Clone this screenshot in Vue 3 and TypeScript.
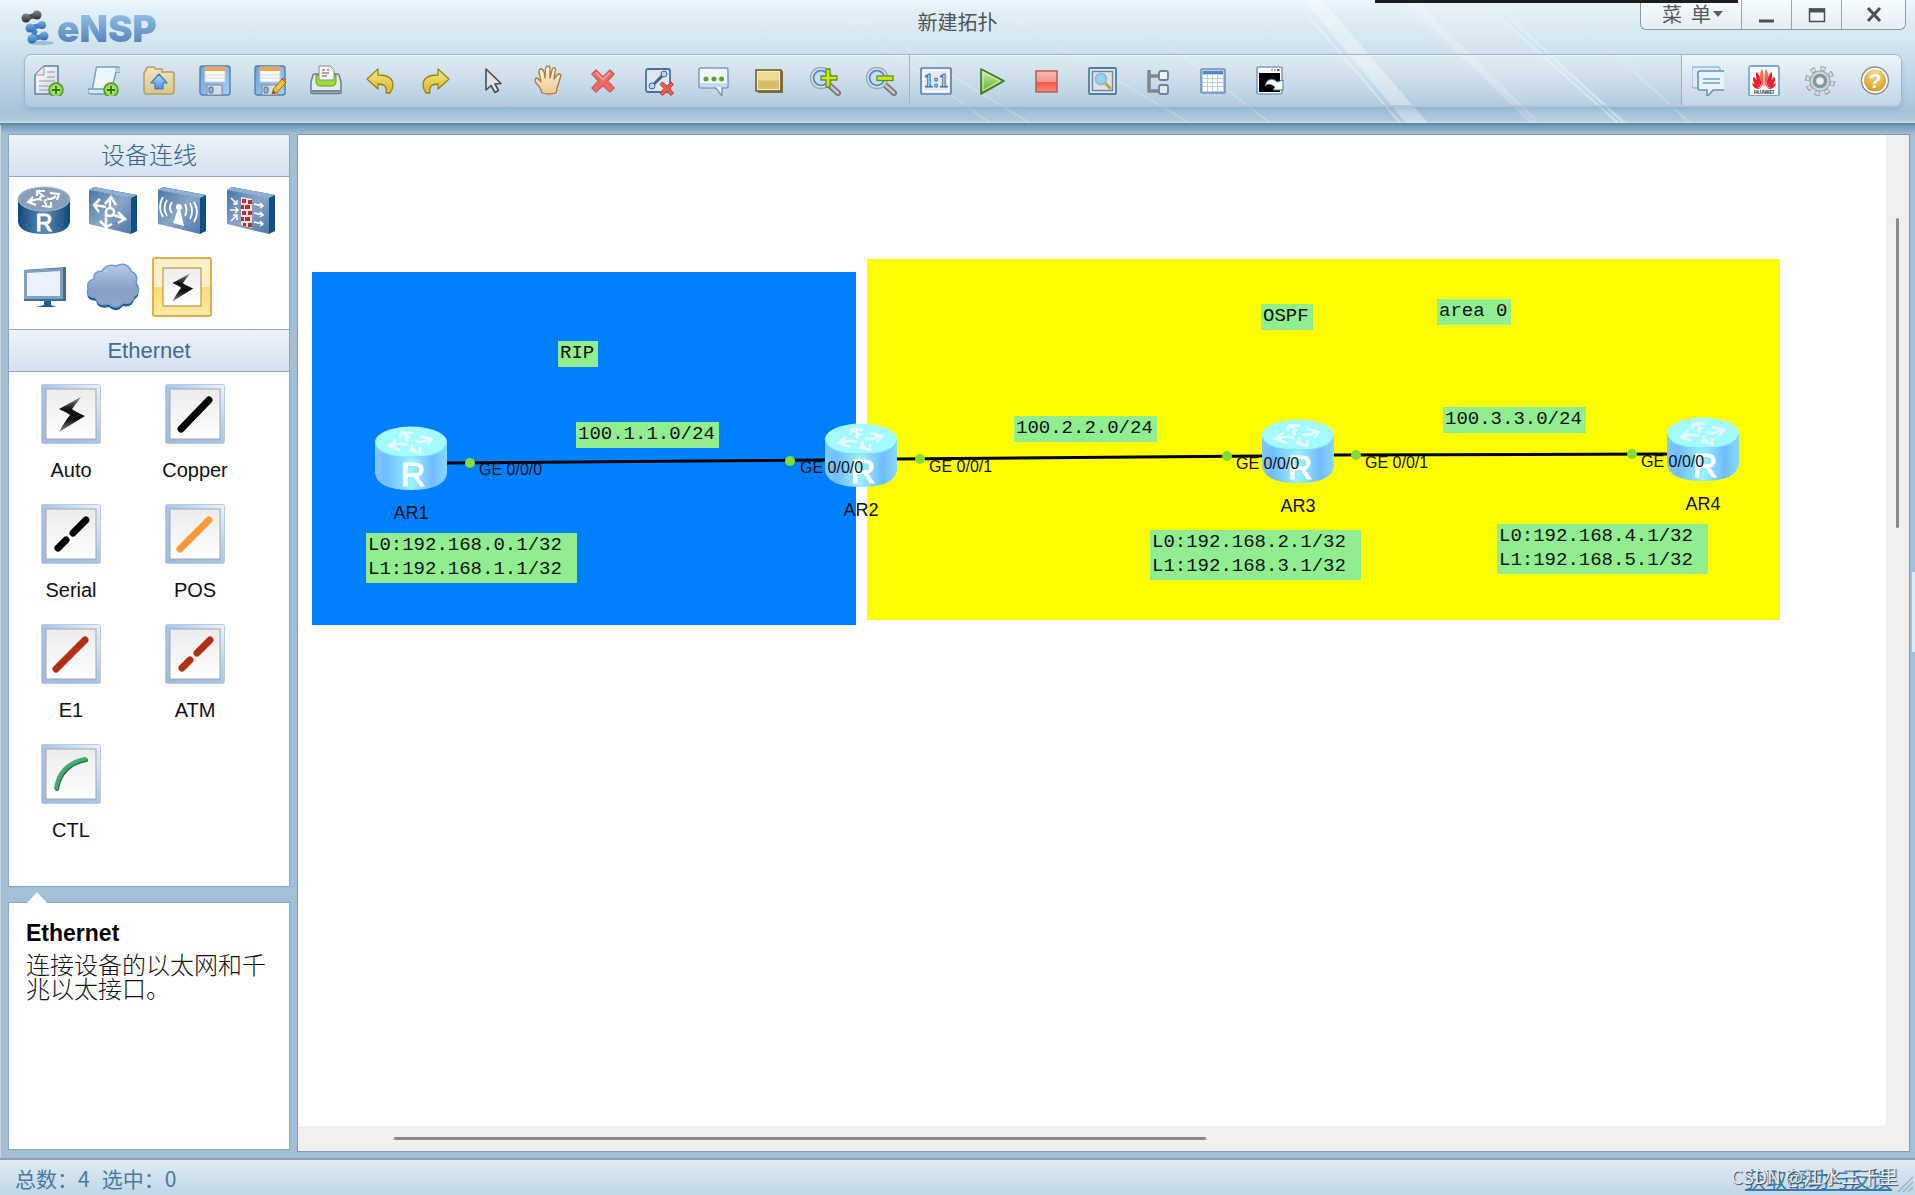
<script setup lang="ts">
interface Tool { icon: string; label: string }
interface Placed { x: number; y: number }
interface Note extends Placed { text: string }
interface Device extends Placed { name: string }
interface Glyph extends Placed { text: string; kind: string }

const editTools: Tool[] = [
  { icon: 'new', label: '新建拓扑' },
  { icon: 'script', label: '新建试卷' },
  { icon: 'open', label: '打开' },
  { icon: 'save', label: '保存' },
  { icon: 'saveas', label: '另存为' },
  { icon: 'print', label: '打印' },
  { icon: 'undo', label: '撤销' },
  { icon: 'redo', label: '恢复' },
  { icon: 'cursor', label: '选择' },
  { icon: 'hand', label: '拖动' },
  { icon: 'delete', label: '删除' },
  { icon: 'unlink', label: '删除连线' },
  { icon: 'text', label: '文本' },
  { icon: 'rect', label: '调色板' },
  { icon: 'zoomin', label: '放大' },
  { icon: 'zoomout', label: '缩小' },
]

const runTools: Tool[] = [
  { icon: 'reset', label: '重置大小' },
  { icon: 'play', label: '开启设备' },
  { icon: 'stop', label: '停止设备' },
  { icon: 'capture', label: '数据抓包' },
  { icon: 'tree', label: '显示接口' },
  { icon: 'grid', label: '显示网格' },
  { icon: 'cli', label: '打开命令行' },
]

const helpTools: Tool[] = [
  { icon: 'chat', label: '论坛' },
  { icon: 'huawei', label: '官网' },
  { icon: 'gear', label: '设置' },
  { icon: 'help', label: '帮助' },
]

const toolGroups = [
  { name: 'edit', tools: editTools },
  { name: 'run', tools: runTools },
  { name: 'aid', tools: helpTools },
]

// Letters that sit on top of an icon
const glyphs: Record<string, Glyph> = {
  reset: { text: '1:1', kind: 'ratio', x: 16, y: 23 },
  huawei: { text: 'HUAWEI', kind: 'tiny', x: 16, y: 30 },
  help: { text: '?', kind: 'mark', x: 16, y: 24 },
}

const categories: Tool[] = [
  { icon: 'router', label: '路由器' },
  { icon: 'switch', label: '交换机' },
  { icon: 'wlan', label: '无线局域网' },
  { icon: 'firewall', label: '防火墙' },
  { icon: 'pc', label: '终端' },
  { icon: 'cloud', label: '其他设备' },
  { icon: 'link', label: '设备连线' },
]

const cables: Tool[] = [
  { icon: 'auto', label: 'Auto' },
  { icon: 'copper', label: 'Copper' },
  { icon: 'serial', label: 'Serial' },
  { icon: 'pos', label: 'POS' },
  { icon: 'e1', label: 'E1' },
  { icon: 'atm', label: 'ATM' },
  { icon: 'ctl', label: 'CTL' },
]

const devices: Device[] = [
  { name: 'AR1', x: 77, y: 291 },
  { name: 'AR2', x: 527, y: 288 },
  { name: 'AR3', x: 964, y: 284 },
  { name: 'AR4', x: 1369, y: 282 },
]

const links = [
  { x1: 149, y1: 328, x2: 527, y2: 325 },
  { x1: 599, y1: 324, x2: 964, y2: 321 },
  { x1: 1036, y1: 320, x2: 1369, y2: 319 },
]

const dots: Placed[] = [
  { x: 172, y: 328 },
  { x: 492, y: 326 },
  { x: 622, y: 324 },
  { x: 929, y: 321 },
  { x: 1058, y: 320 },
  { x: 1334, y: 319 },
]

const ports: Note[] = [
  { text: 'GE 0/0/0', x: 181, y: 326 },
  { text: 'GE 0/0/0', x: 502, y: 324 },
  { text: 'GE 0/0/1', x: 631, y: 323 },
  { text: 'GE 0/0/0', x: 938, y: 320 },
  { text: 'GE 0/0/1', x: 1067, y: 319 },
  { text: 'GE 0/0/0', x: 1343, y: 318 },
]

const notes: Note[] = [
  { text: 'RIP', x: 260, y: 206 },
  { text: '100.1.1.0/24', x: 278, y: 287 },
  { text: 'L0:192.168.0.1/32 \nL1:192.168.1.1/32 ', x: 68, y: 398 },
  { text: 'OSPF', x: 963, y: 169 },
  { text: 'area 0', x: 1139, y: 164 },
  { text: '100.2.2.0/24', x: 716, y: 281 },
  { text: '100.3.3.0/24', x: 1145, y: 272 },
  { text: 'L0:192.168.2.1/32 \nL1:192.168.3.1/32 ', x: 852, y: 395 },
  { text: 'L0:192.168.4.1/32 \nL1:192.168.5.1/32 ', x: 1199, y: 389 },
]

const at = (p: Placed) => ({ left: p.x + 'px', top: p.y + 'px' })
</script>

<template>
  <div class="window">
    <svg class="sprite" aria-hidden="true">
      <defs>
        <linearGradient id="gPaper" x1="0" y1="0" x2="1" y2="1"><stop offset="0" stop-color="#fff" /><stop offset="1" stop-color="#cfd5dc" /></linearGradient>
        <linearGradient id="gFolder" x1="0" y1="0" x2="0" y2="1"><stop offset="0" stop-color="#f0e6c0" /><stop offset="1" stop-color="#d8c68a" /></linearGradient>
        <linearGradient id="gBlue" x1="0" y1="0" x2="0" y2="1"><stop offset="0" stop-color="#bcdcff" /><stop offset="1" stop-color="#4f8fe0" /></linearGradient>
        <linearGradient id="gDisk" x1="0" y1="0" x2="1" y2="1"><stop offset="0" stop-color="#6ea3d8" /><stop offset="1" stop-color="#a9cdf0" /></linearGradient>
        <linearGradient id="gGold" x1="0" y1="0" x2="0" y2="1"><stop offset="0" stop-color="#f7ea86" /><stop offset="1" stop-color="#d8b62a" /></linearGradient>
        <linearGradient id="gGreen" x1="0" y1="0" x2="0" y2="1"><stop offset="0" stop-color="#d7efb6" /><stop offset="1" stop-color="#55a51f" /></linearGradient>
        <linearGradient id="gRed" x1="0" y1="0" x2="0" y2="1"><stop offset="0" stop-color="#f6bdb8" /><stop offset="0.5" stop-color="#f3958c" /><stop offset="0.55" stop-color="#f4574a" /><stop offset="1" stop-color="#f58a7d" /></linearGradient>
        <linearGradient id="gHand" x1="0" y1="0" x2="0" y2="1"><stop offset="0" stop-color="#fff6e6" /><stop offset="1" stop-color="#eec78d" /></linearGradient>
        <radialGradient id="gPlus"><stop offset="0" stop-color="#d6f59a" /><stop offset="1" stop-color="#7ecb3c" /></radialGradient>
        <radialGradient id="gHelp" cx="0.5" cy="0.2" r="0.9"><stop offset="0" stop-color="#f8d98c" /><stop offset="1" stop-color="#d6920e" /></radialGradient>
        <linearGradient id="gBox" x1="0" y1="0" x2="1" y2="1"><stop offset="0" stop-color="#4877a8" /><stop offset="0.5" stop-color="#8aa6c6" /><stop offset="1" stop-color="#4c78a8" /></linearGradient>
        <linearGradient id="gCyl" x1="0" y1="0" x2="1" y2="0"><stop offset="0" stop-color="#12487c" /><stop offset="0.5" stop-color="#5f8cb6" /><stop offset="1" stop-color="#12487c" /></linearGradient>
        <linearGradient id="gCloud" x1="0" y1="0" x2="0" y2="1"><stop offset="0" stop-color="#b4cae8" /><stop offset="0.6" stop-color="#869fc4" /><stop offset="1" stop-color="#90a8ca" /></linearGradient>
        <linearGradient id="gNode" x1="0" y1="0" x2="1" y2="0"><stop offset="0" stop-color="#86c8fb" /><stop offset="0.15" stop-color="#70bcff" /><stop offset="0.5" stop-color="#9af2ff" /><stop offset="0.8" stop-color="#70bcff" /><stop offset="1" stop-color="#8ad8ff" /></linearGradient>
        <linearGradient id="gFrame" x1="0" y1="1" x2="1" y2="0"><stop offset="0" stop-color="#9bb9dc" /><stop offset="0.5" stop-color="#a9c5e8" /><stop offset="1" stop-color="#eef4fc" /></linearGradient>
        <linearGradient id="gTile" x1="0" y1="0" x2="0" y2="1"><stop offset="0" stop-color="#ececec" /><stop offset="1" stop-color="#fff" /></linearGradient>
        <linearGradient id="gBolt" x1="0" y1="0" x2="0" y2="1"><stop offset="0" stop-color="#8c8c84" /><stop offset="0.35" stop-color="#11140c" /><stop offset="0.65" stop-color="#11140c" /><stop offset="1" stop-color="#8c8c84" /></linearGradient>
        <linearGradient id="gBead" x1="0" y1="0" x2="0" y2="1"><stop offset="0" stop-color="#7fb2e2" /><stop offset="1" stop-color="#2a68b0" /></linearGradient>
        <linearGradient id="gDark" x1="0" y1="0" x2="0" y2="1"><stop offset="0" stop-color="#8a8a8a" /><stop offset="1" stop-color="#2c2c2c" /></linearGradient>
      </defs>

      <symbol id="i-plus" viewBox="0 0 16 16">
        <circle cx="8" cy="8" r="7" fill="url(#gPlus)" stroke="#4f9a22" stroke-width="1.5" />
        <path d="M8 4v8M4 8h8" stroke="#35701a" stroke-width="1.8" />
      </symbol>
      <symbol id="i-new" viewBox="0 0 32 32">
        <path d="M12 2H26V30H3V11Z" fill="url(#gPaper)" stroke="#5f7fa3" stroke-width="1.5" stroke-linejoin="round" />
        <path d="M12 2V11H3Z" fill="#e8ebee" stroke="#8d9cae" />
        <path d="M15 8h8M15 13h8M7 17h16M7 22h12M7 26h9" stroke="#a8b7c8" stroke-width="1.6" />
        <use href="#i-plus" x="16" y="18" width="16" height="16" />
      </symbol>
      <symbol id="i-script" viewBox="0 0 32 32">
        <path d="M9 3H30Q33 4 32 8H28L23 27H4L8 6Q8 3 9 3Z" fill="#eef6fa" stroke="#6fa0ba" stroke-width="1.4" />
        <path d="M0 25H24Q26 30 23 30H3Q-1 30 0 25Z" fill="#d5e6ee" stroke="#6fa0ba" stroke-width="1.4" />
        <path d="M27 4h5v4h-5z" fill="#b5d2df" />
        <use href="#i-plus" x="15" y="18" width="16" height="16" />
      </symbol>
      <symbol id="i-open" viewBox="0 0 32 32">
        <path d="M3 6Q3 3 6 3H11L13 5H19V8H29Q31 8 31 11V27Q31 30 28 30H4Q1 30 1 27V9Z" fill="url(#gFolder)" stroke="#b59f57" stroke-width="1.5" />
        <path d="M16 10L24 19H20V25H12V19H8Z" fill="url(#gBlue)" stroke="#3f76c6" stroke-width="1.2" stroke-linejoin="round" />
      </symbol>
      <symbol id="i-save" viewBox="0 0 32 32">
        <rect x="1" y="2" width="30" height="29" rx="2.5" fill="url(#gDisk)" stroke="#4d7fb9" stroke-width="1.4" />
        <path d="M6 3H26V18H6Z" fill="#fafafa" stroke="#c2d2e2" />
        <path d="M5.500 3H26.500V7H5.500Z" fill="#f5a54a" />
        <path d="M7 11h18M7 14h18" stroke="#dadada" />
        <path d="M8 21H23V31H8Z" fill="#dcdfe2" stroke="#7b8c9e" />
        <rect x="10" y="23" width="4" height="6" rx="1" fill="#8fb6e0" stroke="#4f6f92" />
      </symbol>
      <symbol id="i-saveas" viewBox="0 0 32 32">
        <use href="#i-save" width="32" height="32" />
        <path d="M18 30L19.500 25L28 15L32 18.500L23 28.500Z" fill="#f5c51d" stroke="#9b6a11" />
        <path d="M28 15L32 18.500L33 17L29.500 14Z" fill="#e9867a" stroke="#a5473c" />
        <path d="M18 30L19.500 26L22 29Z" fill="#b8432b" />
      </symbol>
      <symbol id="i-print" viewBox="0 0 32 32">
        <path d="M3 11Q3 10 5 10H27Q29 10 29 11L31 18V28Q31 29.500 29 29.500H3Q1 29.500 1 28V18Z" fill="#e7ebee" stroke="#697b90" stroke-width="1.5" />
        <path d="M6 11H26V17Q26 22 22 22H10Q6 22 6 17Z" fill="#9fdc35" stroke="#5f9e1a" />
        <path d="M9 2H20L24 6V16H9Z" fill="#f5f5f5" stroke="#8b8f94" />
        <path d="M12 6h3M17 6h2M12 9h7M12 12h5" stroke="#8d8d8d" stroke-width="1.4" />
        <path d="M2 26H30V28.500H2Z" fill="#77879a" />
      </symbol>
      <symbol id="i-undo" viewBox="0 0 32 32">
        <path d="M13 5V11Q27 11 28 20Q28 25 25 29H21Q23 20 13 20V25L2 15Z" fill="url(#gGold)" stroke="#9a8113" stroke-width="1.3" stroke-linejoin="round" />
      </symbol>
      <symbol id="i-redo" viewBox="0 0 32 32">
        <path d="M17 5V11Q3 11 2 20Q2 25 5 29H9Q7 20 17 20V25L28 15Z" fill="url(#gGold)" stroke="#9a8113" stroke-width="1.3" stroke-linejoin="round" />
      </symbol>
      <symbol id="i-cursor" viewBox="0 0 32 32">
        <path d="M10 5V26L15 21.500L19 28.500L22.500 26.500L19 20L25 19.500Z" fill="#e3e3e3" stroke="#4e4e4e" stroke-width="1.6" stroke-linejoin="round" />
      </symbol>
      <symbol id="i-hand" viewBox="0 0 32 32">
        <path d="M10 29Q9 24 4 19Q2 16 4 14Q6 14 9 18L7 8Q7 5 9 5Q11 5 12 8L13 14L13.500 5Q14 2 16 2Q18 2 18 5V14L20 6Q21 3 23 4Q24 5 23 8L22 15L25 11Q27 9 29 11L27 18Q25 23 24 29Q17 31 10 29Z" fill="url(#gHand)" stroke="#a77d45" stroke-width="1.3" stroke-linejoin="round" />
      </symbol>
      <symbol id="i-delete" viewBox="0 0 32 32">
        <path d="M9 6L16 13L23 6L27 10L20.500 17L27 24L23 28L16 21.500L9 28L5 24L11.500 17L5 10Z" fill="#f2695f" stroke="#d0605a" stroke-width="1.6" stroke-linejoin="round" />
        <path d="M9 8.500L16 15.500L23 8.500" stroke="#f9aaa4" fill="none" stroke-width="1.5" />
      </symbol>
      <symbol id="i-unlink" viewBox="0 0 32 32">
        <rect x="3" y="5" width="24" height="23" rx="2" fill="#dfe6ee" stroke="#4e7099" stroke-width="1.8" />
        <path d="M9 22L21 10" stroke="#41658f" stroke-width="3" />
        <circle cx="21" cy="10" r="3" fill="#b7d2f3" stroke="#41658f" /><circle cx="9" cy="22" r="3" fill="#b7d2f3" stroke="#41658f" />
        <path d="M19.500 18L24 22L28 18L30.500 20.500L26.500 24.500L30.500 29L28 31.500L24 27.500L19.500 31.500L17 29L21 24.500L17 20.500Z" fill="#ef5b4c" stroke="#b93d33" />
      </symbol>
      <symbol id="i-text" viewBox="0 0 32 32">
        <path d="M3 4H28Q30 4 30 6V22Q30 24 28 24H24V32L18 24H3Q1 24 1 22V6Q1 4 3 4Z" fill="#f2f7fd" stroke="#7b9cc2" stroke-width="1.5" />
        <path d="M2 19H29V23H2Z" fill="#c5d9ef" />
        <circle cx="8" cy="15" r="2.500" fill="#5fa328" /><circle cx="16" cy="15" r="2.500" fill="#5fa328" /><circle cx="23.500" cy="15" r="2.500" fill="#5fa328" />
      </symbol>
      <symbol id="i-rect" viewBox="0 0 32 32">
        <path d="M4 7H29V29H4Z" fill="#7c7040" />
        <rect x="2" y="6" width="25" height="21" fill="#ecd994" stroke="#6e6130" stroke-width="1.6" />
        <path d="M4 16.500H25V25H4Z" fill="#d5be6a" />
        <rect x="3.500" y="7.500" width="22" height="18" fill="none" stroke="#f9efc4" />
      </symbol>
      <symbol id="i-lens" viewBox="0 0 32 32">
        <path d="M19 20L29 29" stroke="#77797c" stroke-width="6" stroke-linecap="round" /><path d="M19 20L29 29" stroke="#c6c8ca" stroke-width="2.500" stroke-linecap="round" />
        <circle cx="12" cy="14" r="10.500" fill="#e9edf1" stroke="#a1a9b1" stroke-width="1.5" />
        <circle cx="12" cy="14" r="7.500" fill="#c4defa" stroke="#5d8ecb" stroke-width="2" />
      </symbol>
      <symbol id="i-zoomin" viewBox="0 0 32 32">
        <use href="#i-lens" width="32" height="32" />
        <path d="M17 5H21V12H28V16H21V23H17V16H12V12H17Z" fill="#c8e820" stroke="#63940f" stroke-width="1.3" />
      </symbol>
      <symbol id="i-zoomout" viewBox="0 0 32 32">
        <use href="#i-lens" width="32" height="32" />
        <rect x="12" y="12" width="16" height="4.500" fill="#c8e820" stroke="#63940f" stroke-width="1.3" />
      </symbol>
      <symbol id="i-reset" viewBox="0 0 32 32">
        <rect x="1" y="4" width="30" height="26" rx="1" fill="#e6ebf0" stroke="#5b83ae" stroke-width="1.7" />
        <rect x="3.500" y="6.500" width="25" height="21" fill="none" stroke="#fff" />
      </symbol>
      <symbol id="i-play" viewBox="0 0 32 32">
        <path d="M5 5L28 17L5 30Z" fill="url(#gGreen)" stroke="#3e7a1b" stroke-width="1.6" stroke-linejoin="round" />
        <path d="M7 8.500L24 17L7 26.500Z" fill="none" stroke="#d4efc0" />
      </symbol>
      <symbol id="i-stop" viewBox="0 0 32 32">
        <rect x="5" y="7" width="21" height="21" fill="url(#gRed)" stroke="#b9625c" stroke-width="1.6" />
      </symbol>
      <symbol id="i-capture" viewBox="0 0 32 32">
        <rect x="2" y="4" width="27" height="26" rx="1" fill="#dde5ec" stroke="#567ba2" stroke-width="1.8" />
        <rect x="5.500" y="7.500" width="20" height="19" fill="#dfe2e5" stroke="#6a87a6" stroke-width="1.4" />
        <path d="M18 19L23 24" stroke="#c9a040" stroke-width="3" stroke-linecap="round" />
        <circle cx="14" cy="15" r="5.500" fill="#8fd4fa" stroke="#9fb3c6" stroke-width="1.6" />
      </symbol>
      <symbol id="i-tree" viewBox="0 0 32 32">
        <path d="M6 6V27H16M6 12H16" fill="none" stroke="#7f868c" stroke-width="3.500" />
        <rect x="16" y="7" width="9" height="9" rx="2" fill="#f3f5f7" stroke="#6d8399" stroke-width="1.8" />
        <rect x="16" y="21" width="9" height="9" rx="2" fill="#e3e7ea" stroke="#6d8399" stroke-width="1.8" />
      </symbol>
      <symbol id="i-grid" viewBox="0 0 32 32">
        <rect x="3" y="5" width="24" height="24" rx="1" fill="#b9cbe0" stroke="#6f93bd" stroke-width="1.6" />
        <path d="M5 7H25V10H5Z" fill="#5586c6" />
        <path d="M5 11h4v3h-4zM10 11h4v3h-4zM15 11h4v3h-4zM20 11h5v3h-5zM5 15h4v3h-4zM10 15h4v3h-4zM15 15h4v3h-4zM20 15h5v3h-5zM5 19h4v3h-4zM10 19h4v3h-4zM15 19h4v3h-4zM20 19h5v3h-5zM5 23h4v4h-4zM10 23h4v4h-4zM15 23h4v4h-4zM20 23h5v4h-5z" fill="#fff" />
      </symbol>
      <symbol id="i-cli" viewBox="0 0 32 32">
        <rect x="3" y="3" width="25" height="27" rx="2" fill="#fff" stroke="#7f9bbd" stroke-width="1.6" />
        <path d="M5 9H26V28H5Z" fill="#000" />
        <path d="M17 6h2M20 6h2" stroke="#777" /><path d="M23 6h2.500" stroke="#d33" stroke-width="2" />
        <path d="M11 22Q13 13 21 16L23 18L29 16V26H19L21 23Q15 18 11 22Z" fill="#fff" stroke="#4a79ae" stroke-width="1" />
      </symbol>
      <symbol id="i-chat" viewBox="0 0 32 32">
        <rect x="0" y="3" width="28" height="21" rx="2" fill="#dcebf7" stroke="#9abbd9" stroke-width="1.3" />
        <path d="M8 7H31Q33 7 33 9V24Q33 26 31 26H21L15 33V26H8Q6 26 6 24V9Q6 7 8 7Z" fill="#e9f3fb" stroke="#6d8fb4" stroke-width="1.6" />
        <path d="M11 15h17M11 19h17" stroke="#6f9acb" stroke-width="1.6" />
      </symbol>
      <symbol id="i-huawei" viewBox="0 0 32 32">
        <rect x="1" y="2" width="30" height="30" rx="2" fill="#f7f9fb" stroke="#7ba9d9" stroke-width="1.8" />
        <g fill="#ea1c2b">
          <path d="M15.500 23Q9 13 14 5Q16 7 15.500 23Z" fill="#f26a50" /><path d="M16.500 23Q23 13 18 5Q16 7 16.500 23Z" fill="#f26a50" />
          <path d="M14 23Q7 18 8 8Q12 9 14 23Z" /><path d="M18 23Q25 18 24 8Q20 9 18 23Z" />
          <path d="M13 24Q4 21 5 13Q9 14 13 24Z" /><path d="M19 24Q28 21 27 13Q23 14 19 24Z" />
          <path d="M12 25Q5 25 4 19Q8 20 12 25Z" /><path d="M20 25Q27 25 28 19Q24 20 20 25Z" />
        </g>
      </symbol>
      <symbol id="i-gear" viewBox="0 0 32 32">
        <circle cx="17" cy="17" r="12.500" fill="none" stroke="#8b9ea0" stroke-width="5" stroke-dasharray="5 4.817" />
        <circle cx="17" cy="17" r="12.500" fill="none" stroke="#d3dddf" stroke-width="3" stroke-dasharray="4 5.817" stroke-dashoffset="-0.500" />
        <circle cx="17" cy="17" r="10" fill="#cdd8da" stroke="#9dadaf" stroke-width="1.2" />
        <circle cx="17" cy="17" r="5.500" fill="#e8f0f4" stroke="#84989b" stroke-width="3.500" />
      </symbol>
      <symbol id="i-help" viewBox="0 0 32 32">
        <circle cx="16" cy="16.500" r="13.500" fill="#fff" stroke="#8a8f94" stroke-width="1.4" />
        <circle cx="16" cy="16.500" r="11" fill="url(#gHelp)" />
      </symbol>

      <symbol id="i-router" viewBox="0 0 56 52">
        <path d="M2 15V37Q4 49 28 49Q52 49 54 37V15Z" fill="url(#gCyl)" />
        <ellipse cx="28" cy="14" rx="26" ry="12" fill="#8a9db9" stroke="#a9bad0" />
        <path d="M21 11V6H29M22 7L27 11Q22 12 25 15M31 13Q35 16 40 11M34 8L43 9L41 15M26 15Q20 13 13 17M17 12L12 17L20 20M31 15Q26 15 31 20M26 21L35 22V17" fill="none" stroke="#fff" stroke-width="2" />
      </symbol>
      <symbol id="i-box" viewBox="0 0 56 52">
        <path d="M4 5L9 2L52 10V46L46 49L46 13Z" fill="#0d4f86" />
        <path d="M4 5L9 2L52 10L46 13Z" fill="#8fb0d0" />
        <path d="M4 5L46 13V49L4 39Z" fill="url(#gBox)" />
      </symbol>
      <symbol id="i-switch" viewBox="0 0 56 52">
        <use href="#i-box" width="56" height="52" />
        <g fill="none" stroke="#fff" stroke-width="2.500">
          <path d="M25 22V15M20 19L26 12L31 20M21 22L10 20M15 14L9 20L14 27M29 30L40 34M33 27L40 34L33 38M21 28V42M15 36L21 42L27 39" />
          <circle cx="25" cy="27" r="4" />
        </g>
      </symbol>
      <symbol id="i-wlan" viewBox="0 0 56 52">
        <use href="#i-box" width="56" height="52" />
        <path d="M24 24L19 38L30 41L26 24Z" fill="#fff" /><circle cx="25" cy="22" r="3" fill="#fff" />
        <path d="M18 17Q14 23 18 28M13 15Q8 23 13 31M9 12Q3 22 9 32M31 19Q34 25 31 31M36 18Q40 26 36 34M40 17Q46 27 40 37" fill="none" stroke="#fff" stroke-width="1.800" />
      </symbol>
      <symbol id="i-firewall" viewBox="0 0 56 52">
        <use href="#i-box" width="56" height="52" />
        <path d="M18 12L29 14V43L18 40Z" fill="#f5e3e3" />
        <path d="M19 14h4v4h-4zM25 15h4v4h-4zM18 20h3v4h-3zM22 20h5v4h-5zM19 26h4v4h-4zM25 26h4v4h-4zM18 32h3v4h-3zM22 32h5v4h-5zM20 38h3v3h-3zM25 38h4v4h-4z" fill="#c22a2e" />
        <path d="M8 13L14 19M10 19H14V15M7 25H15M12 22L15 25L12 28M8 36L14 30M10 30H14V35M31 19L40 21M37 18L40 21L37 23M31 28L40 30M37 27L40 30L37 32M31 37L40 39M37 36L40 39L37 41" fill="none" stroke="#fff" stroke-width="1.500" />
      </symbol>
      <symbol id="i-pc" viewBox="0 0 56 52">
        <path d="M8 9L50 6V40H8Z" fill="#416b99" /><path d="M8 9L47 7V38H8Z" fill="#7f9fc2" />
        <path d="M11 12L44 10V35H11Z" fill="#e9f1fb" />
        <path d="M28 40H35V44L40 46H20L28 44Z" fill="#265c93" />
      </symbol>
      <symbol id="i-cloud" viewBox="0 0 56 52">
        <path d="M9 18Q8 10 17 10Q22 2 31 5Q42 0 46 10Q54 14 51 22Q57 30 49 36Q47 44 38 42Q31 50 24 43Q13 46 11 37Q0 36 3 28Q1 20 9 18Z" transform="translate(0 3)" fill="#1e5790" />
        <path d="M9 18Q8 10 17 10Q22 2 31 5Q42 0 46 10Q54 14 51 22Q57 30 49 36Q47 44 38 42Q31 50 24 43Q13 46 11 37Q0 36 3 28Q1 20 9 18Z" fill="url(#gCloud)" stroke="#6d9bd0" stroke-width="1.500" />
      </symbol>
      <symbol id="i-bolt" viewBox="0 0 60 60">
        <path d="M40 13L18 25Q27 29 29 31Q24 37 18 48L44 32Q33 27 31 25Z" fill="url(#gBolt)" />
      </symbol>
      <symbol id="i-link" viewBox="0 0 56 52">
        <rect x="9" y="7" width="38" height="38" fill="url(#gTile)" stroke="#bd9b3f" stroke-width="1.200" />
        <use href="#i-bolt" x="4" y="2" width="48" height="48" />
      </symbol>
      <symbol id="i-tile" viewBox="0 0 60 60">
        <rect x="0.500" y="0.500" width="59" height="59" rx="2" fill="url(#gFrame)" stroke="#b8cbe2" />
        <rect x="5" y="5" width="50" height="50" fill="url(#gTile)" stroke="#9fa9b6" />
      </symbol>
      <symbol id="i-auto" viewBox="0 0 60 60"><use href="#i-tile" width="60" height="60" /><use href="#i-bolt" width="60" height="60" /></symbol>
      <symbol id="i-copper" viewBox="0 0 60 60"><use href="#i-tile" width="60" height="60" /><path d="M16 45L44 16" stroke="#000" stroke-width="7" stroke-linecap="round" /></symbol>
      <symbol id="i-serial" viewBox="0 0 60 60"><use href="#i-tile" width="60" height="60" /><path d="M17 44L25 36M32 29L45 16" stroke="#000" stroke-width="7" stroke-linecap="round" /></symbol>
      <symbol id="i-pos" viewBox="0 0 60 60"><use href="#i-tile" width="60" height="60" /><path d="M15 45L44 16" stroke="#ff9a36" stroke-width="7" stroke-linecap="round" /></symbol>
      <symbol id="i-e1" viewBox="0 0 60 60"><use href="#i-tile" width="60" height="60" /><path d="M15 45L44 16" stroke="#b03012" stroke-width="7" stroke-linecap="round" /></symbol>
      <symbol id="i-atm" viewBox="0 0 60 60"><use href="#i-tile" width="60" height="60" /><path d="M17 44L25 36M32 29L45 16" stroke="#b03012" stroke-width="7" stroke-linecap="round" /></symbol>
      <symbol id="i-ctl" viewBox="0 0 60 60"><use href="#i-tile" width="60" height="60" /><path d="M16 45Q20 21 45 16" fill="none" stroke="#3b5a48" stroke-width="4" stroke-linecap="round" /><path d="M15 44Q19 20 44 15" fill="none" stroke="#3fae74" stroke-width="4" stroke-linecap="round" /></symbol>

      <symbol id="i-node" viewBox="0 0 72 64">
        <path d="M0 17V47Q2 64 36 64Q70 64 72 47V17Z" fill="url(#gNode)" />
        <ellipse cx="36" cy="16" rx="36" ry="15.500" fill="#a4fbff" />
        <path d="M0 17Q2 31 36 31Q70 31 72 17" fill="none" stroke="#7fd6fa" stroke-width="1.200" />
        <path d="M25 12L27 6L38 7M28 7L34 11Q28 13 34 15M40 15Q46 18 54 13M45 10L57 13L52 19M32 19Q25 16 16 20M21 14L14 20L25 24M39 19Q33 20 41 25M34 24L45 27V21" fill="none" stroke="#e6f9fd" stroke-width="2.600" />
      </symbol>
    </svg>

    <header class="header">
      <svg class="streaks" viewBox="0 0 1115 123" preserveAspectRatio="xMaxYMin slice" aria-hidden="true">
        <path d="M590 0H680L830 123H740Z" fill="#fff" opacity="0.1" />
        <path d="M504 0H522L628 123H606Z" fill="#fff" opacity="0.35" />
        <path d="M495 0L600 123" stroke="#e9fbff" stroke-width="2" opacity="0.4" />
        <path d="M610 0L735 123" stroke="#fff" stroke-width="8" opacity="0.2" />
        <path d="M680 0L818 123M690 0L824 123" stroke="#dcfaff" stroke-width="2" opacity="0.5" />
        <path d="M780 22L890 123" stroke="#c9f2fb" stroke-width="2" opacity="0.35" />
        <path d="M20 0L190 123M60 20L230 123M220 23L390 123M350 30L470 123" stroke="#e2f6fc" stroke-width="2" opacity="0.25" fill="none" />
      </svg>
      <div class="titlebar">
        <div class="brand">
          <svg width="34" height="36" viewBox="0 0 34 36" aria-hidden="true">
            <ellipse cx="20" cy="33" rx="13" ry="2" fill="#7ba3cf" opacity="0.6" />
            <path d="M5 8L16 5" stroke="#4d4d4d" stroke-width="5" /><circle cx="5" cy="8" r="4.500" fill="url(#gDark)" /><circle cx="16" cy="5" r="4.500" fill="url(#gDark)" />
            <path d="M21 15L9 18L14 22L11 29L23 26" fill="none" stroke="#4683c3" stroke-width="5" stroke-linejoin="round" />
            <circle cx="21" cy="15" r="4" fill="url(#gBead)" /><circle cx="9" cy="18" r="4.500" fill="url(#gBead)" /><circle cx="11" cy="29" r="4.500" fill="url(#gBead)" /><circle cx="23" cy="26" r="4.500" fill="url(#gBead)" />
          </svg>
          <span class="brand-name">eNSP</span>
        </div>
        <h1 class="doc-title">新建拓扑</h1>
        <div class="win-controls">
          <button class="menu" type="button">菜&nbsp; 单<svg width="12" height="8" viewBox="0 0 12 8" aria-hidden="true"><path d="M1 1H11L6 7Z" fill="#5b6065" /></svg></button>
          <button type="button" aria-label="最小化"><svg width="20" height="20" viewBox="0 0 20 20"><path d="M2 16H17" stroke="#4b5055" stroke-width="3" /></svg></button>
          <button type="button" aria-label="最大化"><svg width="20" height="20" viewBox="0 0 20 20"><path d="M2.500 4H17.500V16.500H2.500Z" fill="none" stroke="#4b5055" stroke-width="1.500" /><path d="M2 5.500H18" stroke="#4b5055" stroke-width="4" /></svg></button>
          <button class="close" type="button" aria-label="关闭"><svg width="20" height="20" viewBox="0 0 20 20"><path d="M4 3L16 16M16 3L4 16" stroke="#4b5055" stroke-width="3" /></svg></button>
        </div>
      </div>
      <nav class="toolbar">
        <div v-for="g in toolGroups" :key="g.name" class="group" :class="g.name">
          <button v-for="t in g.tools" :key="t.icon" type="button" :aria-label="t.label">
            <svg viewBox="0 0 32 32">
              <use :href="'#i-' + t.icon" width="32" height="32" />
              <text v-if="glyphs[t.icon]" :x="glyphs[t.icon].x" :y="glyphs[t.icon].y" :class="glyphs[t.icon].kind">{{ glyphs[t.icon].text }}</text>
            </svg>
          </button>
        </div>
      </nav>
      <div class="dock-strip"></div>
    </header>

    <main class="body">
      <aside class="side">
        <section class="panel palette">
          <h2 class="panel-title">设备连线</h2>
          <div class="categories">
            <button v-for="c in categories" :key="c.icon" type="button" :class="{ active: c.icon === 'link' }" :aria-label="c.label">
              <svg viewBox="0 0 56 52">
                <use :href="'#i-' + c.icon" width="56" height="52" />
                <text v-if="c.icon === 'router'" class="letter" x="28" y="46">R</text>
              </svg>
            </button>
          </div>
          <h2 class="panel-title second">Ethernet</h2>
          <div class="cables">
            <button v-for="c in cables" :key="c.icon" type="button">
              <svg viewBox="0 0 60 60"><use :href="'#i-' + c.icon" width="60" height="60" /></svg>
              <span>{{ c.label }}</span>
            </button>
          </div>
        </section>
        <section class="panel about">
          <svg class="notch" width="22" height="12" viewBox="0 0 22 12" aria-hidden="true"><path d="M0 12L11 0L22 12Z" fill="#fff" /></svg>
          <h3>Ethernet</h3>
          <p>连接设备的以太网和千兆以太接口。</p>
        </section>
      </aside>

      <section class="canvas">
        <div class="stage">
          <div class="zone rip"></div>
          <div class="zone ospf"></div>
          <svg class="wires" width="100%" height="100%" aria-hidden="true">
            <line v-for="l in links" :key="l.x1" v-bind="l" stroke="#000" stroke-width="3" />
          </svg>
          <div v-for="d in devices" :key="d.name" class="device" :style="at(d)">
            <svg viewBox="0 0 72 64">
              <use href="#i-node" width="72" height="64" />
              <text class="letter" x="38" y="60">R</text>
            </svg>
            <span>{{ d.name }}</span>
          </div>
          <i v-for="d in dots" :key="d.x" class="dot" :style="at(d)"></i>
          <span v-for="p in ports" :key="p.x" class="port" :style="at(p)">{{ p.text }}</span>
          <div v-for="n in notes" :key="n.text" class="note" :style="at(n)">{{ n.text }}</div>
        </div>
        <div class="track vertical"><i></i></div>
        <div class="track horizontal"><i></i></div>
      </section>
      <button class="drawer" type="button" aria-label="展开"></button>
    </main>

    <footer class="status">
      <div class="counts"><span>总数：4</span><span>选中：0</span></div>
      <div class="feedback">
        <a href="#">获取帮助与反馈</a>
        <span class="watermark">CSDN @江水三千里</span>
      </div>
      <svg class="grip" width="18" height="18" viewBox="0 0 18 18" aria-hidden="true"><path d="M2 17L17 2M7 17L17 7M12 17L17 12" stroke="#9db2c2" stroke-width="1.500" /></svg>
    </footer>
  </div>
</template>

<style>
body {
  margin: 0;
}
</style>

<style scoped>
* {
  box-sizing: border-box;
}
.window {
  min-height: 100vh;
  display: flex;
  flex-direction: column;
  background: #a3bfd6;
  font-family: "Liberation Sans", "Noto Sans CJK SC", sans-serif;
  color: #111;
  overflow: hidden;
}
button {
  padding: 0;
  border: 0;
  background: none;
  font: inherit;
  color: inherit;
}
h1,
h2,
h3,
p {
  margin: 0;
  font-weight: 400;
}
.sprite {
  position: absolute;
  width: 0;
  height: 0;
}

.header {
  position: relative;
  height: 125px;
  flex: none;
  border-bottom: 2px solid #6389a3;
  background: linear-gradient(#ecf7fc 0, #e1f0f8 12px, #d3e5ef 42px, #bed4e4 80px, #a6c3da 112px, #aec9de 120px, #c8dce8 123px);
}
.streaks {
  position: absolute;
  right: 0;
  top: 0;
  width: 1115px;
  height: 123px;
}
.titlebar {
  position: relative;
  height: 54px;
  display: grid;
  grid-template-columns: 1fr auto 1fr;
}
.brand {
  display: flex;
  align-items: flex-start;
  gap: 2px;
  padding: 10px 0 0 21px;
}
.brand-name {
  font-family: Inter, sans-serif;
  font-weight: 900;
  font-size: 37px;
  line-height: 37px;
  background: linear-gradient(#8dbbe2 15%, #5b88bb 85%);
  background-clip: text;
  color: transparent;
}
.doc-title {
  font-family: "Noto Sans CJK SC", sans-serif;
  font-size: 20px;
  line-height: 28px;
  padding-top: 8px;
  color: #4f5458;
}
.win-controls {
  justify-self: end;
  display: flex;
  height: 30px;
  margin-right: 9px;
  border: 1px solid #8f9aa2;
  border-top: 0;
  border-radius: 0 0 6px 6px;
  background: linear-gradient(#f8fcfe, #e4eef4);
}
.win-controls button {
  width: 50px;
  display: flex;
  align-items: center;
  justify-content: center;
  border-left: 1px solid #9aa5ad;
}
.win-controls .menu {
  width: 100px;
  padding: 0 0 2px 4px;
  border-left: 0;
  gap: 1px;
  font-family: "Noto Sans CJK SC", sans-serif;
  font-size: 20px;
  line-height: 26px;
  color: #55595d;
}
.win-controls .close {
  width: 64px;
}
.dock-strip {
  position: absolute;
  top: 0;
  right: 177px;
  width: 363px;
  height: 3px;
  background: #1c1e20;
}
.toolbar {
  position: relative;
  display: flex;
  height: 53px;
  margin: 0 13px 0 24px;
  border: 1px solid #a2b6c6;
  border-bottom: 2px solid #b9c5d6;
  border-radius: 7px;
  background: linear-gradient(rgba(255, 255, 255, 0.35), rgba(255, 255, 255, 0.08));
  box-shadow: inset 0 1px 0 #e9f3f9, 0 3px 4px rgba(100, 145, 185, 0.35);
}
.group {
  display: flex;
  align-items: center;
  justify-content: space-between;
}
.group button {
  width: 32px;
  height: 32px;
}
.group svg {
  display: block;
  width: 32px;
  height: 32px;
  overflow: visible;
}
.group text,
.letter {
  text-anchor: middle;
  font-family: "Liberation Sans", sans-serif;
  font-weight: 700;
  fill: #fff;
}
.group .ratio {
  font-family: "Liberation Serif", serif;
  font-size: 18px;
  fill: #b9dbf8;
  stroke: #3f73a8;
  stroke-width: 1px;
}
.group .tiny {
  font-size: 5px;
  fill: #333;
}
.group .mark {
  font-size: 21px;
}
.edit {
  width: 885px;
  padding: 0 12px 0 7px;
  border-right: 1px solid #a5b3c0;
}
.run {
  width: 376px;
  padding-left: 10px;
}
.aid {
  width: 220px;
  margin-left: auto;
  padding: 0 10px 0 10px;
  border-left: 1px solid #9db1c2;
  border-radius: 0 6px 6px 0;
  background: linear-gradient(#edf5fa, #c3d5e6);
}

.body {
  position: relative;
  flex: 1;
  display: flex;
  gap: 7px;
  padding: 9px 5px 6px 7px;
  background: linear-gradient(#6c98b9, #a3bfd6 9px);
  border-left: 1px solid #c9d6e0;
}
.side {
  width: 282px;
  display: flex;
  flex-direction: column;
  gap: 15px;
}
.panel {
  border: 1px solid #8ea4bd;
  background: #fff;
}
.palette {
  flex: 1;
}
.panel-title {
  height: 42px;
  text-align: center;
  font-size: 22px;
  color: #33658f;
  border-bottom: 1px solid #93a8c0;
  background: linear-gradient(#edf2fa, #d5e2ee);
}
.panel-title:first-child {
  font-family: "Noto Sans CJK SC", sans-serif;
  font-size: 24px;
  font-weight: 300;
  line-height: 38px;
}
.panel-title.second {
  height: 43px;
  line-height: 42px;
  border-top: 1px solid #93a8c0;
  color: #3d6c9d;
}
.categories {
  display: grid;
  grid-template-columns: repeat(4, 69px);
  grid-template-rows: 67px 85px;
  align-items: center;
  justify-items: center;
}
.categories button {
  width: 60px;
  height: 60px;
  display: flex;
  align-items: center;
  justify-content: center;
  border-radius: 3px;
}
.categories svg {
  width: 56px;
  height: 52px;
  flex: none;
}
.categories .letter {
  font-size: 23px;
  font-weight: 400;
  stroke: #fff;
  stroke-width: 1px;
}
.categories .active {
  border: 2px solid #dcae4e;
  background: linear-gradient(#fdf0c9 50%, #fbdc77 50%, #fdeaa5);
}
.cables {
  display: grid;
  grid-template-columns: 124px 124px;
  grid-auto-rows: 120px;
  padding-top: 12px;
}
.cables button {
  display: flex;
  flex-direction: column;
  align-items: center;
  gap: 15px;
}
.cables svg {
  width: 60px;
  height: 60px;
}
.cables span {
  font-size: 20px;
  line-height: 22px;
}
.about {
  position: relative;
  flex: none;
  height: 248px;
  margin-bottom: 2px;
  padding: 17px 12px 0 17px;
}
.notch {
  position: absolute;
  left: 17px;
  top: -11px;
}
.about h3 {
  font-size: 23px;
  font-weight: 700;
  line-height: 26px;
  color: #000;
}
.about p {
  margin-top: 6px;
  font-family: "Noto Sans CJK SC", sans-serif;
  font-size: 24px;
  font-weight: 300;
  line-height: 24px;
}

.canvas {
  flex: 1;
  display: grid;
  grid-template: 1fr 25px / 1fr 23px;
  border: 1px solid #8799af;
  background: #efefef;
  min-width: 0;
}
.stage {
  position: relative;
  overflow: hidden;
  background: #fff;
  border-radius: 0 0 3px 0;
}
.zone {
  position: absolute;
}
.rip {
  left: 14px;
  top: 137px;
  width: 544px;
  height: 353px;
  background: #0080ff;
}
.ospf {
  left: 569px;
  top: 124px;
  width: 913px;
  height: 361px;
  background: #ff0;
}
.wires {
  position: absolute;
  inset: 0;
}
.device {
  position: absolute;
  width: 72px;
  display: flex;
  flex-direction: column;
  align-items: center;
  gap: 13px;
}
.device svg {
  width: 72px;
  height: 64px;
}
.device .letter {
  font-size: 34px;
  font-weight: 400;
  stroke: #fff;
  stroke-width: 1px;
}
.device span {
  font-size: 18px;
  line-height: 20px;
}
.dot {
  position: absolute;
  width: 10px;
  height: 10px;
  margin: -5px;
  border-radius: 50%;
  background: #84dc3c;
}
.port {
  position: absolute;
  font-size: 16px;
  line-height: 18px;
  white-space: nowrap;
}
.note {
  position: absolute;
  padding: 0 4px 2px 2px;
  background: #90ee90;
  font-family: "Liberation Mono", monospace;
  font-size: 19px;
  line-height: 24px;
  white-space: pre;
}
.track {
  display: flex;
}
.track i {
  border-radius: 2px;
  background: #8a8a8a;
}
.vertical {
  justify-content: center;
  padding-top: 83px;
}
.vertical i {
  width: 3px;
  height: 310px;
}
.horizontal {
  align-items: center;
  padding-left: 96px;
}
.horizontal i {
  width: 812px;
  height: 3px;
}
.drawer {
  position: absolute;
  right: 0;
  top: 447px;
  width: 3px;
  height: 80px;
  background: #dfeaf3;
}

.status {
  position: relative;
  flex: none;
  height: 37px;
  display: flex;
  align-items: center;
  justify-content: space-between;
  padding: 0 23px 0 15px;
  border-top: 2px solid #8fa0ad;
  background: linear-gradient(#dfebf4, #c0d7e6);
  font-family: "Noto Sans CJK SC", sans-serif;
  font-size: 21px;
  line-height: 30px;
  color: #4a7aa2;
}
.counts {
  display: flex;
  gap: 12px;
}
.feedback {
  position: relative;
}
.feedback a {
  color: #3c78a8;
}
.watermark {
  position: absolute;
  right: -6px;
  top: -2px;
  font-size: 19px;
  white-space: nowrap;
  color: #e6ebef;
  text-shadow: 1px 1px 1px #3d4850;
}
.grip {
  position: absolute;
  right: 1px;
  bottom: 2px;
}
</style>
